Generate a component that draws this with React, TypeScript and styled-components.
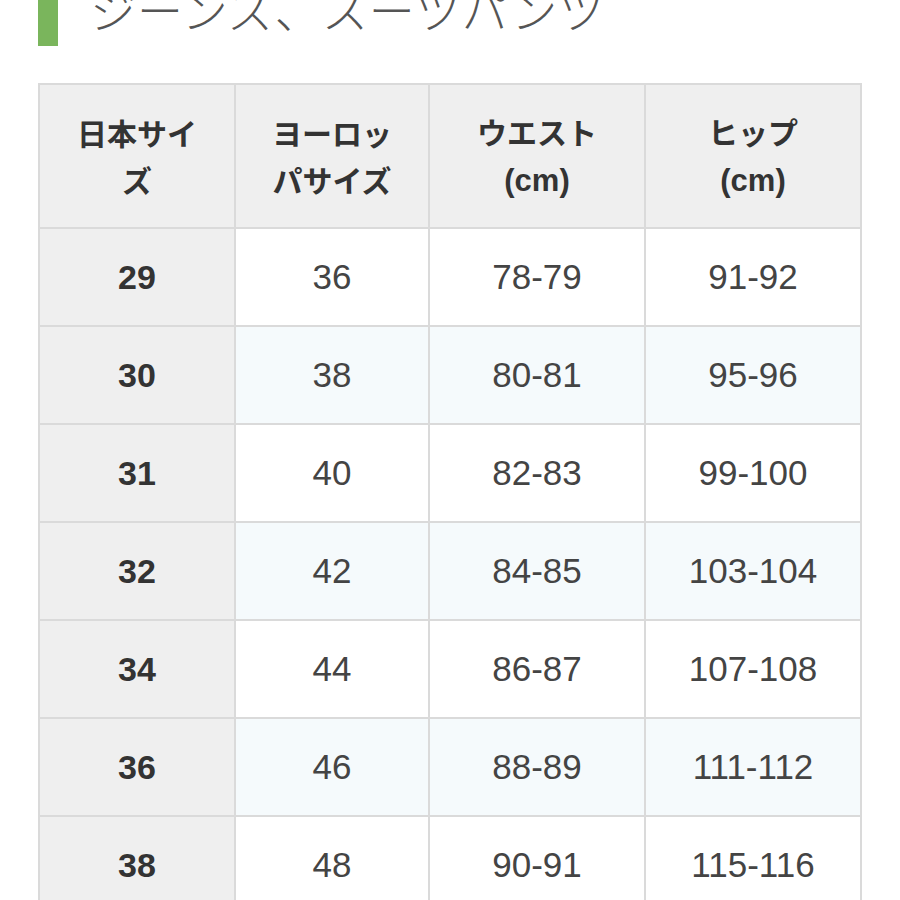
import React from 'react';
import styled, { createGlobalStyle } from 'styled-components';

const GlobalStyle = createGlobalStyle`
  html, body {
    margin: 0;
    padding: 0;
    background: #ffffff;
  }
  body {
    font-family: "Liberation Sans", "Noto Sans CJK JP", sans-serif;
    overflow: hidden;
  }
`;

const Page = styled.div`
  width: 900px;
  height: 900px;
  overflow: hidden;
  padding: 0 40px 0 38px;
  box-sizing: border-box;
`;

const Heading = styled.h2`
  margin: -30px 0 0;
  height: 76px;
  display: flex;
  align-items: center;
  border-left: 20px solid #7ab55c;
  padding-left: 32px;
  font-family: "Noto Sans CJK JP", sans-serif;
  font-weight: 300;
  font-size: 46px;
  color: #555555;
  letter-spacing: 1px;
  white-space: nowrap;
`;

const Table = styled.table`
  margin-top: 37px;
  width: 822px;
  border-collapse: collapse;
  table-layout: fixed;
  border: 2px solid #dadada;
`;

const HeadCell = styled.th`
  height: 142px;
  background: #efefef;
  border: 2px solid #dadada;
  font-family: "Noto Sans CJK JP", sans-serif;
  font-weight: 700;
  font-size: 30px;
  line-height: 47px;
  color: #333333;
  text-align: center;
  vertical-align: middle;
  padding: 0;

  span {
    font-family: "Liberation Sans", sans-serif;
    font-weight: 700;
    font-size: 31px;
  }
`;

const Row = styled.tr<{ $alt: boolean }>`
  background: ${(p) => (p.$alt ? '#f5fafc' : '#ffffff')};
`;

const SizeCell = styled.th`
  height: 96px;
  background: #efefef;
  border: 2px solid #dadada;
  font-family: "Liberation Sans", sans-serif;
  font-weight: 700;
  font-size: 34px;
  color: #333333;
  text-align: center;
  padding: 0;
`;

const Cell = styled.td`
  border: 2px solid #dadada;
  font-family: "Liberation Sans", sans-serif;
  font-weight: 400;
  font-size: 35px;
  color: #444444;
  text-align: center;
  padding: 0;
`;

const rows = [
  ['29', '36', '78-79', '91-92'],
  ['30', '38', '80-81', '95-96'],
  ['31', '40', '82-83', '99-100'],
  ['32', '42', '84-85', '103-104'],
  ['34', '44', '86-87', '107-108'],
  ['36', '46', '88-89', '111-112'],
  ['38', '48', '90-91', '115-116'],
];

export default function App() {
  return (
    <>
      <GlobalStyle />
      <Page>
        <Heading>ジーンズ、スーツパンツ</Heading>
        <Table>
          <colgroup>
            <col style={{ width: 196 }} />
            <col style={{ width: 194 }} />
            <col style={{ width: 216 }} />
            <col style={{ width: 216 }} />
          </colgroup>
          <thead>
            <tr>
              <HeadCell>日本サイ<br />ズ</HeadCell>
              <HeadCell>ヨーロッ<br />パサイズ</HeadCell>
              <HeadCell>ウエスト<br /><span>(cm)</span></HeadCell>
              <HeadCell>ヒップ<br /><span>(cm)</span></HeadCell>
            </tr>
          </thead>
          <tbody>
            {rows.map((r, i) => (
              <Row key={r[0]} $alt={i % 2 === 1}>
                <SizeCell>{r[0]}</SizeCell>
                <Cell>{r[1]}</Cell>
                <Cell>{r[2]}</Cell>
                <Cell>{r[3]}</Cell>
              </Row>
            ))}
          </tbody>
        </Table>
      </Page>
    </>
  );
}
